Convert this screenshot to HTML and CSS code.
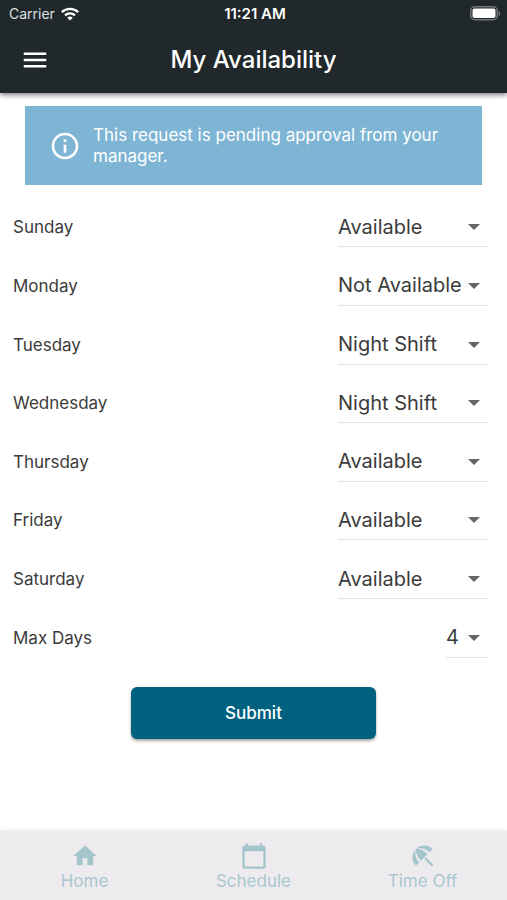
FILE: index.html
```html
<!DOCTYPE html>
<html lang="en">
<head>
<meta charset="utf-8">
<meta name="viewport" content="width=device-width, initial-scale=1">
<title>My Availability</title>
<link rel="stylesheet" href="styles.css">
</head>
<body>
<header class="top">
  <div class="status">
    <div class="carrier">
      <span>Carrier</span>
      <svg width="18" height="14" viewBox="0 0 18 14" fill="none" stroke="#fff" stroke-width="2.4" aria-hidden="true"><path d="M.8 5.2a11.8 11.8 0 0 1 16.4 0M4 8.4a7.2 7.2 0 0 1 10 0"/><path d="M9 13.6 6.2 10.8a4 4 0 0 1 5.6 0z" fill="#fff" stroke="none"/></svg>
    </div>
    <time class="clock">11:21 AM</time>
    <svg class="battery" width="31" height="15" viewBox="0 0 31 15" aria-hidden="true"><rect x=".75" y=".75" width="26.5" height="13" rx="4" fill="none" stroke="#71777a" stroke-width="1.5"/><rect x="2.5" y="2.5" width="23" height="9.5" rx="2" fill="#fff"/><path d="M28.7 5c2 .6 2 4.400 0 5z" fill="#71777a"/></svg>
  </div>
  <div class="appbar">
    <button class="menu" type="button" aria-label="Menu"><svg width="30" height="30" viewBox="0 0 24 24" fill="#fff"><path d="M3 18h18v-2H3v2zm0-5h18v-2H3v2zm0-7v2h18V6H3z"/></svg></button>
    <h1>My Availability</h1>
  </div>
</header>
<main>
  <div class="notice" role="status">
    <svg width="32" height="32" viewBox="0 0 24 24" fill="#fff" aria-hidden="true"><path d="M11 7h2v2h-2zm0 4h2v6h-2zm1-9C6.480 2 2 6.480 2 12s4.480 10 10 10 10-4.480 10-10S17.520 2 12 2zm0 18c-4.410 0-8-3.590-8-8s3.590-8 8-8 8 3.590 8 8-3.590 8-8 8z"/></svg>
    <p>This request is pending approval from your manager.</p>
  </div>
  <form>
    <div class="rows">
      <div class="row"><label for="sun">Sunday</label><div class="pick"><select id="sun"><option>Available</option><option>Not Available</option><option>Night Shift</option></select><svg viewBox="0 0 12 6" aria-hidden="true"><path d="M0 0h12L6 6z"/></svg></div></div>
      <div class="row"><label for="mon">Monday</label><div class="pick"><select id="mon"><option>Available</option><option selected>Not Available</option><option>Night Shift</option></select><svg viewBox="0 0 12 6" aria-hidden="true"><path d="M0 0h12L6 6z"/></svg></div></div>
      <div class="row"><label for="tue">Tuesday</label><div class="pick"><select id="tue"><option>Available</option><option>Not Available</option><option selected>Night Shift</option></select><svg viewBox="0 0 12 6" aria-hidden="true"><path d="M0 0h12L6 6z"/></svg></div></div>
      <div class="row"><label for="wed">Wednesday</label><div class="pick"><select id="wed"><option>Available</option><option>Not Available</option><option selected>Night Shift</option></select><svg viewBox="0 0 12 6" aria-hidden="true"><path d="M0 0h12L6 6z"/></svg></div></div>
      <div class="row"><label for="thu">Thursday</label><div class="pick"><select id="thu"><option>Available</option><option>Not Available</option><option>Night Shift</option></select><svg viewBox="0 0 12 6" aria-hidden="true"><path d="M0 0h12L6 6z"/></svg></div></div>
      <div class="row"><label for="fri">Friday</label><div class="pick"><select id="fri"><option>Available</option><option>Not Available</option><option>Night Shift</option></select><svg viewBox="0 0 12 6" aria-hidden="true"><path d="M0 0h12L6 6z"/></svg></div></div>
      <div class="row"><label for="sat">Saturday</label><div class="pick"><select id="sat"><option>Available</option><option>Not Available</option><option>Night Shift</option></select><svg viewBox="0 0 12 6" aria-hidden="true"><path d="M0 0h12L6 6z"/></svg></div></div>
      <div class="row"><label for="max">Max Days</label><div class="pick short"><select id="max"><option>1</option><option>2</option><option>3</option><option selected>4</option><option>5</option><option>6</option><option>7</option></select><svg viewBox="0 0 12 6" aria-hidden="true"><path d="M0 0h12L6 6z"/></svg></div></div>
    </div>
    <button class="submit" type="submit">Submit</button>
  </form>
</main>
<nav>
  <a href="#home"><svg width="28" height="28" viewBox="0 0 24 24" aria-hidden="true"><path d="M10 20v-6h4v6h5v-8h3L12 3 2 12h3v8z"/></svg>Home</a>
  <a href="#schedule"><svg width="28" height="28" viewBox="0 0 24 24" aria-hidden="true"><path d="M20 3h-1V1h-2v2H7V1H5v2H4c-1.100 0-2 .9-2 2v16c0 1.100.9 2 2 2h16c1.100 0 2-.9 2-2V5c0-1.100-.9-2-2-2zm0 18H4V8h16v13z"/></svg>Schedule</a>
  <a href="#time-off"><svg width="28" height="28" viewBox="0 0 24 24" aria-hidden="true"><path d="M13.127 14.560l1.430-1.430 6.440 6.443L19.570 21zM17.420 8.830l2.860-2.860c-3.950-3.950-10.350-3.960-14.300-.02 3.930-1.300 8.310-.25 11.440 2.880zM5.950 5.980c-3.940 3.950-3.930 10.350.02 14.300l2.860-2.860C5.700 14.290 4.650 9.910 5.950 5.980zM5.970 5.960l-.01.01c-.38 3.010 1.170 6.880 4.300 10.020l5.730-5.730c-3.130-3.130-7.010-4.680-10.020-4.300z"/></svg>Time Off</a>
</nav>
</body>
</html>
```
FILE: styles.css
```css
* { box-sizing: border-box; }

body {
  margin: 0;
  min-height: 100vh;
  display: flex;
  flex-direction: column;
  background: #fff;
  color: #3b3b3b;
  font-family: Inter, "Liberation Sans", sans-serif;
}

button, select { font-family: inherit; }
svg { display: block; flex: none; }

.top {
  background: #20282b;
  color: #fff;
  box-shadow: 0 2px 5px rgba(0, 0, 0, 0.5);
}

.status {
  display: grid;
  grid-template-columns: 1fr auto 1fr;
  align-items: center;
  height: 27px;
  padding: 0 6px 0 9px;
  font-size: 14px;
}
.carrier {
  display: flex;
  align-items: center;
  gap: 6px;
  color: #dfe1e2;
}
.clock {
  font-size: 15px;
  font-weight: 600;
}
.battery { justify-self: end; }

.appbar {
  display: grid;
  grid-template-columns: 30px 1fr 30px;
  align-items: center;
  height: 66px;
  padding: 0 20px;
}
.menu {
  padding: 0;
  border: 0;
  background: none;
}
h1 {
  margin: 0;
  text-align: center;
  font-size: 24px;
  font-weight: 500;
  line-height: 32px;
}

main {
  flex: 1;
  display: flex;
  flex-direction: column;
  padding-top: 13px;
}

.notice {
  display: flex;
  align-items: center;
  gap: 12px;
  margin: 0 25px;
  padding: 19px 24px 18px;
  background: #7eb4d4;
  color: #fff;
}
.notice p {
  margin: 0;
  font-size: 17px;
  line-height: 21px;
}

form {
  flex: 1;
  display: flex;
  flex-direction: column;
  padding: 13px 0 92px;
}
.rows {
  flex: 1;
  display: grid;
  grid-auto-rows: 1fr;
  padding: 0 19px 0 13px;
}
.row {
  display: flex;
  align-items: center;
  justify-content: space-between;
  font-size: 17px;
}
.pick {
  position: relative;
  width: 150px;
}
.pick.short { width: 42px; }
.pick select {
  appearance: none;
  display: block;
  width: 100%;
  height: 40px;
  padding: 0 24px 0 0;
  border: 0;
  border-bottom: 1px solid #e2e2e2;
  border-radius: 0;
  background: none;
  color: #3b3b3b;
  font-size: 20px;
}
.pick svg {
  position: absolute;
  right: 8px;
  top: 17px;
  width: 12px;
  height: 6px;
  fill: #666;
  pointer-events: none;
}

.submit {
  align-self: center;
  width: 245px;
  height: 52px;
  margin-top: 20px;
  border: 0;
  border-radius: 6px;
  background: #02617f;
  color: #fff;
  font-size: 17px;
  font-weight: 500;
  box-shadow: 0 2px 3px rgba(0, 0, 0, 0.35);
}

nav {
  display: grid;
  grid-template-columns: repeat(3, 1fr);
  padding: 11px 0 8px;
  background: #eeebee;
  box-shadow: 0 -1px 3px rgba(0, 0, 0, 0.08);
}
nav a {
  display: flex;
  flex-direction: column;
  align-items: center;
  color: #a9c8cf;
  font-size: 17px;
  line-height: 22px;
  text-decoration: none;
}
nav svg { fill: #a5c5cd; }
```
